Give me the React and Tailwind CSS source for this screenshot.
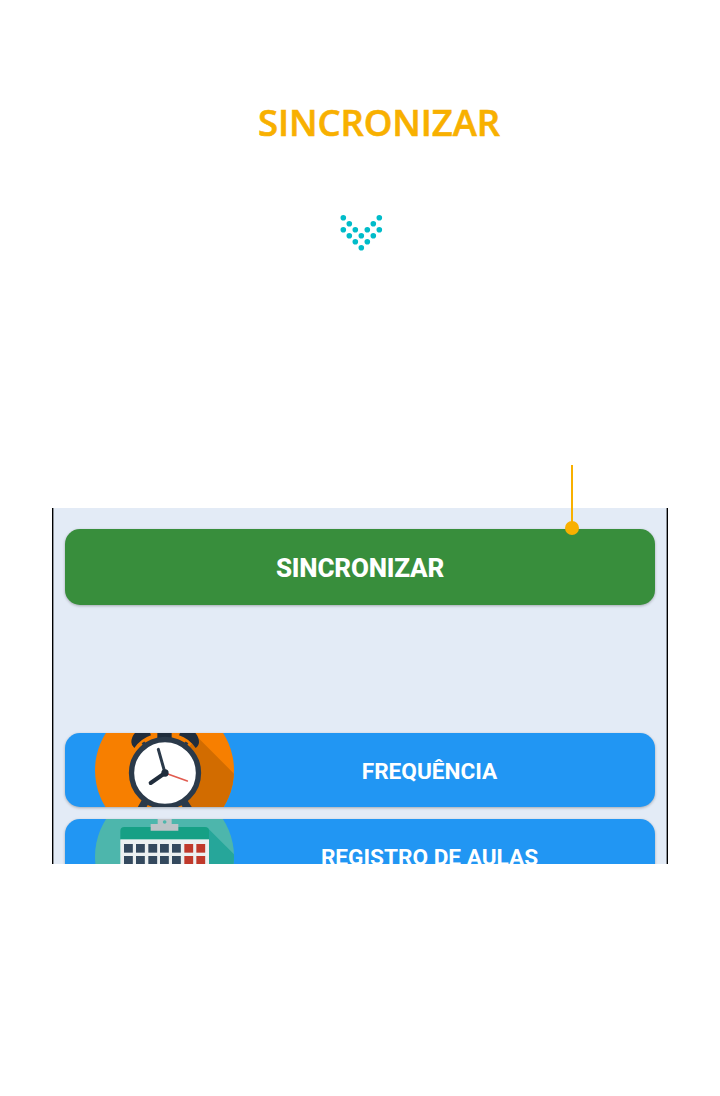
import React from 'react';

const dots = [
  [3, 3], [39, 3], [9, 9], [33, 9], [3, 15], [15, 15], [27, 15], [39, 15],
  [9, 21], [21, 21], [33, 21], [15, 27], [27, 27], [21, 33],
];

function ChevronDots() {
  return (
    <svg className="ml-[340px] mt-[74px] h-[37px] w-[43px] shrink-0" viewBox="-0.3 -0.2 43 37">
      {dots.map(([x, y]) => (
        <circle key={`${x}-${y}`} cx={x} cy={y + 0.5} r="2.800" fill="#00bcc9" />
      ))}
    </svg>
  );
}

function ClockIcon() {
  return (
    <svg className="h-[75px] w-[139px] shrink-0" viewBox="30 24 417 225">
      <circle cx="238.500" cy="136" r="208.500" fill="#f77f00" />
      <clipPath id="clockDisc"><circle cx="238.500" cy="136" r="208.500" /></clipPath>
      <path d="M338 37L480 179V260H300L240 144Z" fill="#d26c00" clipPath="url(#clockDisc)" />
      <g fill="#202d3c">
        <path d="M139 52Q139 30 160 15H192L198 31Q168 41 148 69Q139 62 139 52Z" />
        <path d="M342 52Q342 30 321 15H289L282 31Q311 40 332 69Q342 62 342 52Z" />
        <rect x="217" y="20" width="43" height="24" />
      </g>
      <path d="M174 52L190 75M306 52L290 75" stroke="#2b3a4a" strokeWidth="10" />
      <path d="M185 222L166 256M291 222L313 256" stroke="#2b3a4a" strokeWidth="23" />
      <circle cx="240" cy="144" r="100.500" fill="#fff" stroke="#2b3a4a" strokeWidth="16" />
      <path d="M240 144L307 168" stroke="#e15b4f" strokeWidth="5" strokeLinecap="round" />
      <path d="M240 144L220 73" stroke="#2b3a4a" strokeWidth="9" strokeLinecap="round" />
      <path d="M240 144L197 174" stroke="#202d3c" strokeWidth="12" strokeLinecap="round" />
      <circle cx="240" cy="144" r="11" fill="#202d3c" />
    </svg>
  );
}

const columns = [117, 153, 190, 225, 261, 298, 334];

function CalendarIcon() {
  return (
    <svg className="h-[75px] w-[139px] shrink-0" viewBox="30 282 417 225">
      <circle cx="238.500" cy="395" r="208.500" fill="#4db6ac" />
      <clipPath id="calendarDisc"><circle cx="238.500" cy="395" r="208.500" /></clipPath>
      <path d="M368 309L480 421V520H240V340Z" fill="#26a69a" clipPath="url(#calendarDisc)" />
      <path d="M106 345V318Q106 306 118 306H360Q372 306 372 318V345Z" fill="#16a085" />
      <rect x="106" y="343" width="266" height="170" fill="#ecf0f1" />
      <path d="M218 280H260V297H280V317H197V297H218Z" fill="#bdc3c7" />
      <circle cx="239" cy="291" r="5.500" fill="#4db6ac" />
      {[357, 393, 429, 465].map((y) =>
        columns.map((x, i) => (
          <rect key={`${x}-${y}`} x={x} y={y} width="26.500" height="26" fill={i > 4 ? '#c0392b' : '#34495e'} />
        ))
      )}
    </svg>
  );
}

function MenuCard({ icon, label }) {
  return (
    <div className="flex h-[74.700px] w-full shrink-0 overflow-hidden rounded-[15px] bg-[#2196f3] pl-[30px] shadow-[0_1px_3px_rgba(0,0,0,0.28)]">
      {icon}
      <div className="mr-[30px] flex flex-1 items-center justify-center pt-[3.500px] font-['Roboto',sans-serif] text-[22.600px] leading-none font-bold text-white">
        <span>{label}</span>
      </div>
    </div>
  );
}

export default function App() {
  return (
    <main className="flex h-[1096px] w-[720px] flex-col overflow-hidden bg-white">
      <h1 className="mt-[100px] ml-[258px] h-[40px] w-fit shrink-0 font-['Open_Sans',sans-serif] text-[36.500px] leading-[44px] font-semibold tracking-[-0.120px] whitespace-nowrap text-[#f8b000] [-webkit-text-stroke:0.600px_#f8b000]">
        SINCRONIZAR
      </h1>
      <ChevronDots />
      <section className="mt-[257px] ml-[52px] h-[356px] w-[616px] shrink-0">
        <div className="flex h-full border-x border-black">
          <div className="flex h-full w-full flex-col overflow-hidden border-x border-[#8c9198] bg-[#e3ebf6] px-[11px] pt-[21px]">
            <button className="flex h-[76px] w-full shrink-0 items-center justify-center rounded-[15px] bg-[#388e3c] pt-[2px] font-['Roboto',sans-serif] text-[26px] leading-none font-extrabold tracking-[-0.200px] text-white shadow-[0_1px_3px_rgba(0,0,0,0.28)]">
              <span>SINCRONIZAR</span>
            </button>
            <div className="mt-[127.800px] flex flex-col gap-[11.800px]">
              <MenuCard icon={<ClockIcon />} label="FREQUÊNCIA" />
              <MenuCard icon={<CalendarIcon />} label="REGISTRO DE AULAS" />
            </div>
          </div>
        </div>
      </section>
      <svg className="absolute top-[464px] left-[564px] h-[72px] w-[16px]" viewBox="0 0 16 72">
        <path d="M8 1V64" stroke="#f8b000" strokeWidth="2" />
        <circle cx="8" cy="64" r="7" fill="#f8b000" />
      </svg>
    </main>
  );
}
